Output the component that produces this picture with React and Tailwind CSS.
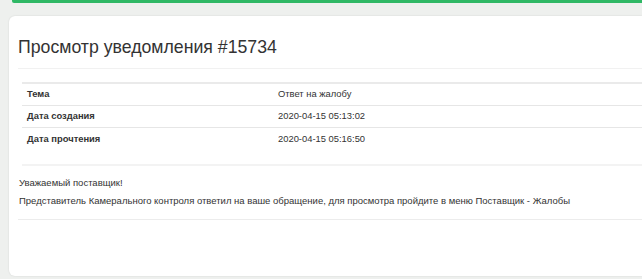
export default function App() {
  const rows = [
    ["Тема", "Ответ на жалобу"],
    ["Дата создания", "2020-04-15 05:13:02"],
    ["Дата прочтения", "2020-04-15 05:16:50"],
  ];
  return (
    <div className="relative w-[642px] h-[279px] overflow-hidden bg-[#eef0ee]" style={{ fontFamily: '"Liberation Sans", Arial, sans-serif' }}>
      <div className="ml-[12px] h-[3px] bg-[#2fb865] rounded-bl-[2px]" />
      <div className="ml-[9px] mt-[13px] h-[260px] bg-white rounded-l-[6px] shadow-[0_0_2px_rgba(0,0,0,0.12)]">
        <div className="pt-[21px] pl-[9px] text-[17.7px] leading-[20px] text-[#333]">Просмотр уведомления #15734</div>
        <div className="ml-[9px] mt-[11px] h-px bg-[#f1f1f1]" />
        <div className="ml-[13px] mt-[13px] border-t-2 border-[#eaeaea]">
          {rows.map(([k, v], i) => (
            <div key={i} className={`flex h-[22px] items-center text-[9.4px] text-[#333] ${i < 2 ? "border-b border-[#e6e6e6]" : ""}`}>
              <div className="w-[256px] pl-[5px] font-bold">{k}</div>
              <div>{v}</div>
            </div>
          ))}
          <div className="h-[14px]" />
          <div className="h-[2px] bg-[#f3f3f3]" />
        </div>
        <div className="pl-[10px] pt-[8px] text-[9.5px] leading-[18px] text-[#333]">
          <div>Уважаемый поставщик!</div>
          <div>Представитель Камерального контроля ответил на ваше обращение, для просмотра пройдите в меню Поставщик - Жалобы</div>
        </div>
        <div className="ml-[9px] mt-[9px] h-px bg-[#ececec]" />
      </div>
    </div>
  );
}
